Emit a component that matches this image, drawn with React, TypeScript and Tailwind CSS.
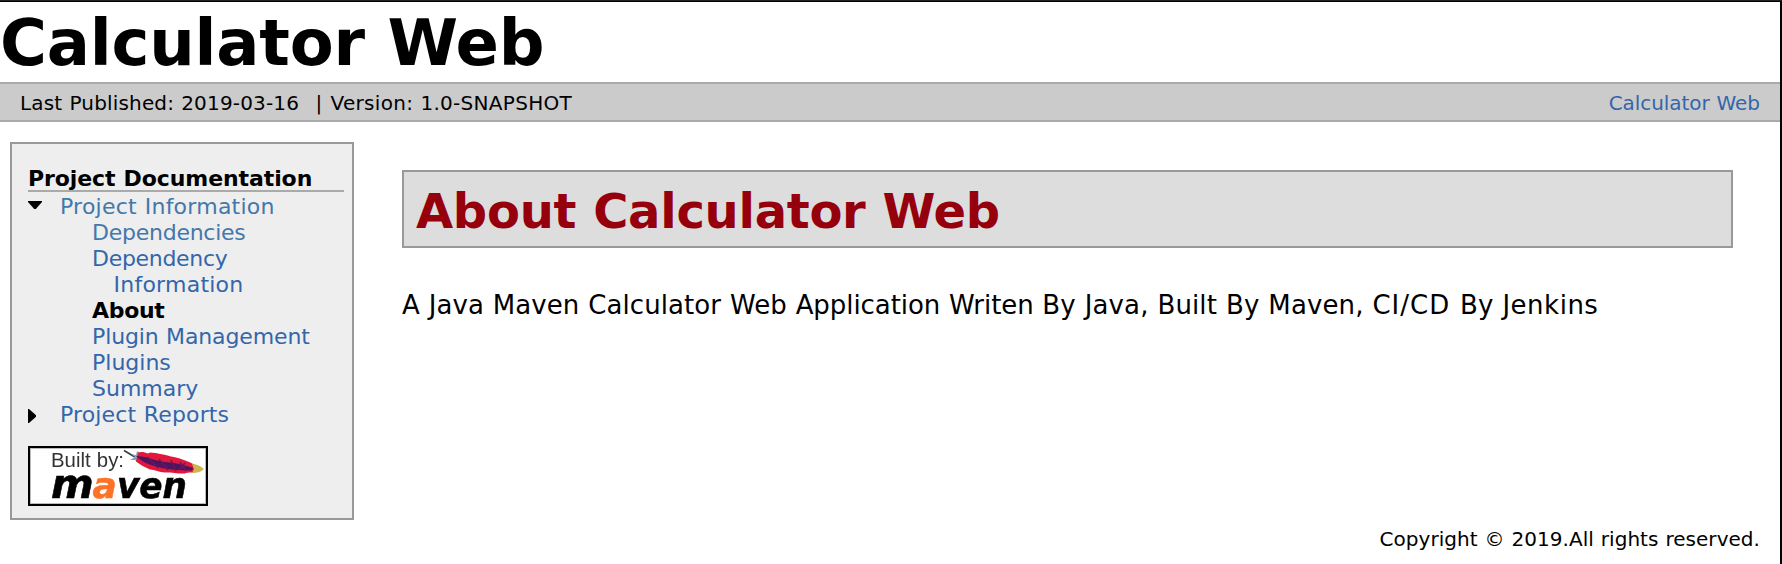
import React from "react";

function MavenBadge() {
  return (
    <svg width="180" height="60" viewBox="0 0 180 60" className="block" role="img" aria-label="Built by Maven">
      <rect x="1" y="1" width="178" height="58" fill="#fff" stroke="#000" strokeWidth="2" />
      <rect x="2.5" y="2.5" width="175" height="55" fill="none" stroke="#bbb" strokeWidth="1" />
      <g style={{ filter: "blur(0.45px)" }}>
        <text x="23" y="21.3" fontSize="20" fill="#333" fontFamily="'Liberation Sans', sans-serif" textLength="73" lengthAdjust="spacingAndGlyphs">
          Built by:
        </text>
        <g fontFamily="'DejaVu Sans', sans-serif" fontWeight="bold" fontStyle="oblique" fontSize="36" stroke="#000" strokeWidth="0.6">
          <text x="23" y="52" fill="#000">
            <tspan fontSize="41">m</tspan>
            <tspan x="64.5" fill="#ff7226" stroke="#ff7226">a</tspan>
            <tspan x="89" textLength="70" lengthAdjust="spacingAndGlyphs">ven</tspan>
          </text>
        </g>
        <path d="M96 4.5 L112 14" stroke="#333b44" strokeWidth="1.6" fill="none" />
        <path d="M103 8 L108 9 L109 5 L112 7 L111 17 L107 14 L102 14 L107 11 Z" fill="#8aa3b5" />
        <path d="M110 6.5 C113 5.5 117 6 120 7.5 L122 6.5 C129 7 136 8.5 143 10.5 L146 11 C154 13 161 15.5 167 19 L168 26 C162 27 160 26 157 27.5 C150 28 146 26.5 137 26.5 C131 26 127 24 122 23.5 C117 21.5 112 18.5 108 15.5 Z" fill="#e0183c" />
        <path d="M108 10 C118 10 126 14.5 137 16 C147 17 155 18.5 165 22 L164 24.5 C152 24.5 139 23.5 128 20.5 C120 18.5 113 15 108 10 Z" fill="#4b1560" />
        <path d="M119 11 L130 22 M131 13 L140 24 M143 14 L148 25 M152 16 L158 25 M157 17 L151 24" stroke="#6b1560" strokeWidth="1.4" />
        <path d="M164 18 C169 18 174 21 176 23 C173 26 169 27 164 27 L166 23 Z" fill="#cdb64e" />
      </g>
    </svg>
  );
}

function Item({ className, children, marker }: { className: string; children: React.ReactNode; marker?: "down" | "right" }) {
  return (
    <li className="flex h-[26px] leading-[26px]">
      {marker === "down" && (
        <svg width="14" height="8" viewBox="0 0 14 8" className="mt-[7px] -mr-[14px] shrink-0">
          <path d="M0 0H14V1L7.8 8H6.2L0 1Z" fill="#000" />
        </svg>
      )}
      {marker === "right" && (
        <svg width="8" height="14" viewBox="0 0 8 14" className="mt-[7px] -mr-[8px] shrink-0">
          <path d="M0 0H1L8 6.2V7.8L1 14H0Z" fill="#000" />
        </svg>
      )}
      <a className={className}>{children}</a>
    </li>
  );
}

export default function App() {
  return (
    <div className="flex h-[564px] w-[1782px] flex-col overflow-hidden bg-white font-['DejaVu_Sans',Verdana,sans-serif] whitespace-nowrap text-black [word-spacing:0.034em]">
      <div className="h-px shrink-0 bg-[#222]" />
      <div className="h-px shrink-0 bg-black" />
      <div className="flex flex-1 border-r-2 border-black">
        <div className="flex flex-1 flex-col">
          <header>
            <h1 className="h-20 pt-1 text-[64px] leading-[74px] font-bold tracking-[-0.2px]">Calculator Web</h1>
            <div className="flex h-10 justify-between border-y-2 border-[#aaa] bg-[#cbcbcb] pt-[2px] pr-5 text-[20px] leading-[34px]">
              <div className="flex">
                <span className="ml-5 w-[295.5px] tracking-[0.17px]">Last Published: 2019-03-16</span>
                <span className="w-[15px]">|</span>
                <span className="tracking-[0.3px]">Version: 1.0-SNAPSHOT</span>
              </div>
              <a className="tracking-[-0.05px] text-[#36a]">Calculator Web</a>
            </div>
          </header>

          <div className="flex">
            <nav className="mt-5 ml-[10px] h-[378px] w-[344px] border-2 border-[#999] bg-[#eee] pt-[22px] pr-2 pl-4 text-[22px]">
              <h5 className="mb-[2px] h-[26px] border-b-2 border-[#aaa] leading-[25px] font-bold tracking-[-0.09px]">Project Documentation</h5>
              <ul>
                <Item marker="down" className="ml-8 tracking-[0.24px] text-[#47a]">Project Information</Item>
                <Item className="ml-16 tracking-[-0.25px] text-[#47a]">Dependencies</Item>
                <Item className="ml-16 tracking-[-0.3px] text-[#36a]">Dependency</Item>
                <Item className="ml-[85.5px] tracking-[0.24px] text-[#36a]">Information</Item>
                <Item className="ml-16 font-bold tracking-[-0.3px]">About</Item>
                <Item className="ml-16 tracking-[-0.12px] text-[#36a]">Plugin Management</Item>
                <Item className="ml-16 text-[#36a]">Plugins</Item>
                <Item className="ml-16 text-[#36a]">Summary</Item>
                <Item marker="right" className="ml-8 tracking-[0.13px] text-[#36a]">Project Reports</Item>
              </ul>
              <div className="mt-[18px]">
                <MavenBadge />
              </div>
            </nav>

            <main className="mt-12 ml-12 w-[1331px]">
              <h2 className="h-[78px] border-2 border-[#999] bg-[#ddd] pt-1 pl-[12px] text-[48px] leading-[70px] font-bold tracking-[-0.28px] text-[#96000c]">
                About Calculator Web
              </h2>
              <p className="mt-[42px] text-[26px] leading-[30px] tracking-[0.12px]">
                <span className="tracking-[0.07px]">A Java Maven Calculator Web </span>
                <span className="tracking-[-0.07px]">Application Writen </span>
                By Java, Built By Maven, <span className="tracking-[1px]">CI/CD </span>
                By <span className="tracking-[0.5px]">Jenkins</span>
              </p>
            </main>
          </div>

          <footer className="mt-[7px] pr-5 text-right text-[20px] leading-6 tracking-[0.04px]">Copyright © 2019.All rights reserved.</footer>
        </div>
      </div>
    </div>
  );
}
